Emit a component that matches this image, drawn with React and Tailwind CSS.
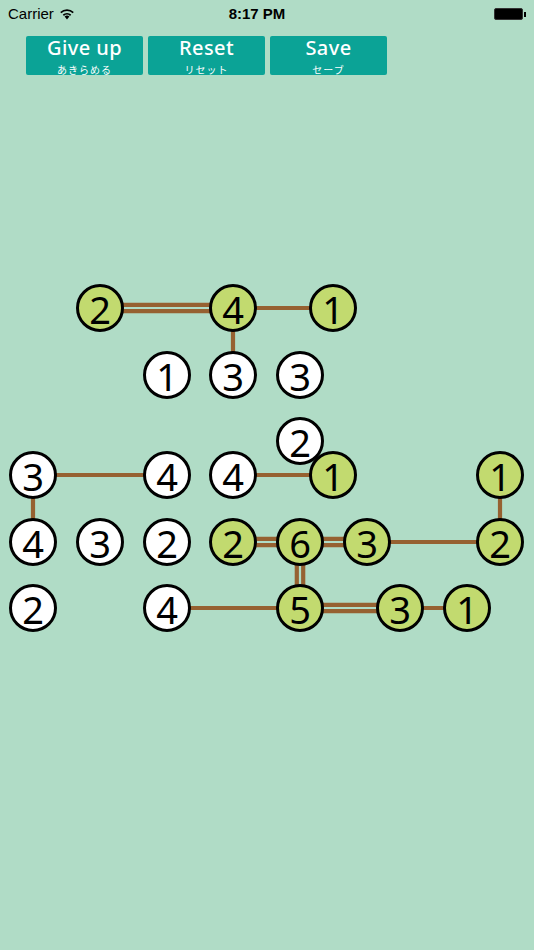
import React from 'react';

// puzzle islands: [cx, cy, number, solved]
const nodes = [
  [100, 308, 2, true], [233, 308, 4, true], [333, 308, 1, true],
  [167, 375, 1, false], [233, 375, 3, false], [300, 375, 3, false],
  [300, 441, 2, false],
  [33, 475, 3, false], [167, 475, 4, false], [233, 475, 4, false], [333, 475, 1, true], [500, 475, 1, true],
  [33, 542, 4, false], [100, 542, 3, false], [167, 542, 2, false], [233, 542, 2, true], [300, 542, 6, true], [367, 542, 3, true], [500, 542, 2, true],
  [33, 608, 2, false], [167, 608, 4, false], [300, 608, 5, true], [400, 608, 3, true], [467, 608, 1, true],
];

// bridges: [x1, y1, x2, y2, count]
const bridges = [
  [100, 308, 233, 308, 2],
  [233, 308, 333, 308, 1],
  [233, 308, 233, 375, 1],
  [33, 475, 167, 475, 1],
  [33, 475, 33, 542, 1],
  [233, 475, 333, 475, 1],
  [500, 475, 500, 542, 1],
  [233, 542, 300, 542, 2],
  [300, 542, 367, 542, 2],
  [367, 542, 500, 542, 1],
  [300, 542, 300, 608, 2],
  [167, 608, 300, 608, 1],
  [300, 608, 400, 608, 2],
  [400, 608, 467, 608, 1],
];

const TOP = 75;

function Bridge({ b }) {
  const [x1, y1, x2, y2, n] = b;
  const vertical = x1 === x2;
  const offs = n === 2 ? [-3.2, 3.2] : [0];
  return offs.map((o, i) =>
    vertical ? (
      <line key={i} x1={x1 + o} y1={y1 - TOP} x2={x2 + o} y2={y2 - TOP} stroke="#966131" strokeWidth="4.2" />
    ) : (
      <line key={i} x1={x1} y1={y1 - TOP + o} x2={x2} y2={y2 - TOP + o} stroke="#966131" strokeWidth="4.2" />
    )
  );
}

function Btn({ title, sub }) {
  return (
    <div className="w-[117px] h-[39px] bg-[#0ba396] rounded-[2px] flex flex-col items-center text-white">
      <div className="text-[20px] leading-[20px] font-medium mt-[2px] tracking-[0.4px]" style={{ fontFamily: '"Noto Sans", sans-serif' }}>{title}</div>
      <div className="text-[10px] leading-[11px] tracking-[1px] mt-[6px]" style={{ fontFamily: '"Noto Sans CJK JP", sans-serif' }}>{sub}</div>
    </div>
  );
}

export default function App() {
  return (
    <div className="w-[534px] h-[950px] bg-[#b0dcc6] flex flex-col overflow-hidden" style={{ fontFamily: '"Liberation Sans", Arial, sans-serif' }}>
      {/* status bar */}
      <div className="h-[28px] flex items-center px-[8px] text-[15px] text-black">
        <div className="flex items-center gap-[5px] w-[150px]">
          <span>Carrier</span>
          <svg width="16" height="12" viewBox="0 0 16 12">
            <path d="M8 11.5 L5.6 8.6 A3.6 3.6 0 0 1 10.4 8.6 Z" fill="#000" />
            <path d="M3.8 6.6 A6.2 6.2 0 0 1 12.2 6.6 L11.1 7.9 A4.5 4.5 0 0 0 4.9 7.9 Z" fill="#000" />
            <path d="M1.2 3.9 A10 10 0 0 1 14.8 3.9 L13.7 5.2 A8.3 8.3 0 0 0 2.3 5.2 Z" fill="#000" />
          </svg>
        </div>
        <div className="flex-1 text-center font-semibold text-[15px] pr-[20px]">8:17 PM</div>
        <div className="w-[150px] flex justify-end items-center">
          <div className="w-[29px] h-[12px] bg-black rounded-[2px] border border-[#333]" />
          <div className="w-[2px] h-[5px] bg-black ml-[1px]" />
        </div>
      </div>

      {/* buttons */}
      <div className="flex gap-[5px] pl-[26px] mt-[8px]">
        <Btn title="Give up" sub="あきらめる" />
        <Btn title="Reset" sub="リセット" />
        <Btn title="Save" sub="セーブ" />
      </div>

      {/* puzzle board */}
      <div className="relative flex-1">
        <svg className="absolute left-0 top-0" width="534" height="875">
          {bridges.map((b, i) => <Bridge key={i} b={b} />)}
        </svg>
        {nodes.map(([cx, cy, n, solved], i) => (
          <div
            key={i}
            className={`absolute w-[48px] h-[48px] rounded-full border-[3px] border-black flex items-center justify-center text-[38px] font-normal text-black ${solved ? 'bg-[#c2da6f]' : 'bg-white'}`}
            style={{ left: cx - 24, top: cy - TOP - 24, fontFamily: '"Noto Sans", sans-serif', lineHeight: '1' }}
          >
            <span className="mt-[1px]">{n}</span>
          </div>
        ))}
      </div>
    </div>
  );
}
